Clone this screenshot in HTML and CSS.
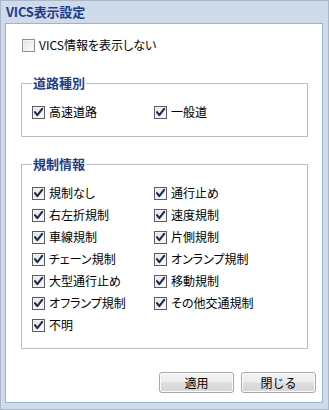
FILE: index.html
```html
<!DOCTYPE html>
<html lang="ja">
<head>
<meta charset="utf-8">
<title>VICS表示設定</title>
<link rel="stylesheet" href="styles.css">
</head>
<body>
<div class="window">
  <div class="titlebar">VICS表示設定</div>
  <div class="panel">
    <label class="row top-row"><span class="box"></span><span class="lbl">VICS情報を表示しない</span></label>

    <fieldset class="group group1">
      <legend>道路種別</legend>
      <div class="grid">
        <label class="row"><span class="box checked"><svg viewBox="0 0 11 11"><path d="M2 5.2 L4.3 8.2 L9.2 1.8"/></svg></span><span class="lbl">高速道路</span></label>
        <label class="row"><span class="box checked"><svg viewBox="0 0 11 11"><path d="M2 5.2 L4.3 8.2 L9.2 1.8"/></svg></span><span class="lbl">一般道</span></label>
      </div>
    </fieldset>

    <fieldset class="group group2">
      <legend>規制情報</legend>
      <div class="grid">
        <label class="row"><span class="box checked"><svg viewBox="0 0 11 11"><path d="M2 5.2 L4.3 8.2 L9.2 1.8"/></svg></span><span class="lbl">規制なし</span></label>
        <label class="row"><span class="box checked"><svg viewBox="0 0 11 11"><path d="M2 5.2 L4.3 8.2 L9.2 1.8"/></svg></span><span class="lbl">通行止め</span></label>
        <label class="row"><span class="box checked"><svg viewBox="0 0 11 11"><path d="M2 5.2 L4.3 8.2 L9.2 1.8"/></svg></span><span class="lbl">右左折規制</span></label>
        <label class="row"><span class="box checked"><svg viewBox="0 0 11 11"><path d="M2 5.2 L4.3 8.2 L9.2 1.8"/></svg></span><span class="lbl">速度規制</span></label>
        <label class="row"><span class="box checked"><svg viewBox="0 0 11 11"><path d="M2 5.2 L4.3 8.2 L9.2 1.8"/></svg></span><span class="lbl">車線規制</span></label>
        <label class="row"><span class="box checked"><svg viewBox="0 0 11 11"><path d="M2 5.2 L4.3 8.2 L9.2 1.8"/></svg></span><span class="lbl">片側規制</span></label>
        <label class="row"><span class="box checked"><svg viewBox="0 0 11 11"><path d="M2 5.2 L4.3 8.2 L9.2 1.8"/></svg></span><span class="lbl">チェーン規制</span></label>
        <label class="row"><span class="box checked"><svg viewBox="0 0 11 11"><path d="M2 5.2 L4.3 8.2 L9.2 1.8"/></svg></span><span class="lbl">オンランプ規制</span></label>
        <label class="row"><span class="box checked"><svg viewBox="0 0 11 11"><path d="M2 5.2 L4.3 8.2 L9.2 1.8"/></svg></span><span class="lbl">大型通行止め</span></label>
        <label class="row"><span class="box checked"><svg viewBox="0 0 11 11"><path d="M2 5.2 L4.3 8.2 L9.2 1.8"/></svg></span><span class="lbl">移動規制</span></label>
        <label class="row"><span class="box checked"><svg viewBox="0 0 11 11"><path d="M2 5.2 L4.3 8.2 L9.2 1.8"/></svg></span><span class="lbl">オフランプ規制</span></label>
        <label class="row"><span class="box checked"><svg viewBox="0 0 11 11"><path d="M2 5.2 L4.3 8.2 L9.2 1.8"/></svg></span><span class="lbl">その他交通規制</span></label>
        <label class="row"><span class="box checked"><svg viewBox="0 0 11 11"><path d="M2 5.2 L4.3 8.2 L9.2 1.8"/></svg></span><span class="lbl">不明</span></label>
      </div>
    </fieldset>

    <div class="buttons">
      <button class="btn">適用</button>
      <button class="btn">閉じる</button>
    </div>
  </div>
</div>
</body>
</html>
```

FILE: styles.css
```css
* { box-sizing: border-box; }
html, body { margin: 0; padding: 0; }
body {
  width: 329px;
  height: 410px;
  font-family: "Noto Sans CJK JP", "Noto Sans", sans-serif;
  font-size: 12px;
  color: #000;
  background: #cfdbea;
}
.window {
  width: 329px;
  height: 410px;
  background: #cfdbea;
  border: 1px solid #a9b7c9;
  display: flex;
  flex-direction: column;
}
.titlebar {
  height: 22px;
  line-height: 22px;
  padding-left: 5px;
  font-size: 13px;
  font-weight: bold;
  color: #1d3e8c;
  letter-spacing: -0.2px;
}
.panel {
  margin: 0 5px 6px 4px;
  flex: 1;
  background: #fff;
  border: 1px solid #98b2da;
  display: flex;
  flex-direction: column;
}
.row {
  display: flex;
  align-items: center;
  height: 22px;
  gap: 4px;
  white-space: nowrap;
}
.lbl {
  font-feature-settings: "palt";
  line-height: 14px;
}
.top-row {
  margin: 10px 0 0 16px;
}
.box {
  width: 13px;
  height: 13px;
  border: 1px solid #8f8f8f;
  background: linear-gradient(135deg, #e2e2e2, #fdfdfd);
  box-shadow: inset 0 0 0 1px #f4f4f4;
  display: flex;
  align-items: center;
  justify-content: center;
  flex: none;
}
.box.checked {
  border-color: #5c5c5c;
}
.box svg {
  width: 11px;
  height: 11px;
  display: block;
}
.box svg path {
  fill: none;
  stroke: #1b2c57;
  stroke-width: 2.1;
  stroke-linecap: round;
  stroke-linejoin: round;
}
.group {
  margin: 19px 14px 0 15px;
  padding: 10px 0 12px 10px;
  border: 1px solid #bbbec6;
  min-width: 0;
}
.group1 { padding-bottom: 13px; }
.group legend {
  padding: 0 1px;
  font-size: 13px;
  line-height: 16px;
  font-weight: bold;
  color: #1f3d8c;
  font-feature-settings: "palt";
}
.grid {
  display: grid;
  grid-template-columns: 122px 1fr;
}
.buttons {
  display: flex;
  justify-content: flex-end;
  gap: 7px;
  margin-top: 23px;
  padding-right: 6px;
}
.btn {
  width: 75px;
  height: 21px;
  padding: 0;
  border: 1px solid #a9a9a9;
  border-radius: 3px;
  background: linear-gradient(#f3f3f3 0%, #ececec 48%, #dddddd 52%, #d6d6d6 100%);
  box-shadow: inset 0 0 0 1px #fbfbfb;
  font-family: "Noto Sans CJK JP", "Noto Sans", sans-serif;
  font-size: 12px;
  color: #000;
  line-height: 18px;
}
```
